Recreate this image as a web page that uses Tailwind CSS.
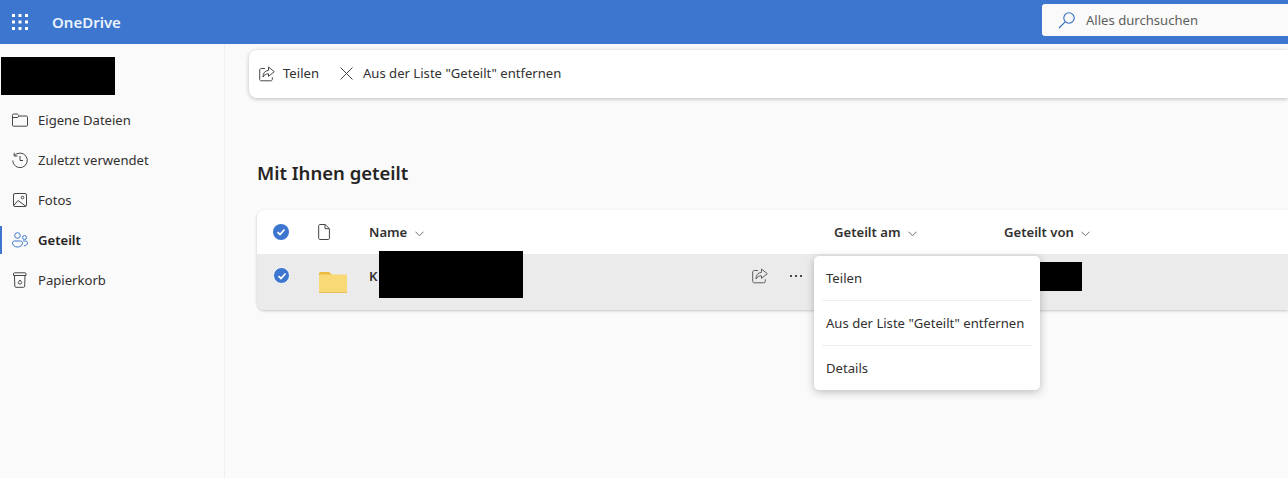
<!DOCTYPE html>
<html lang="de">
<head>
  <meta charset="UTF-8">
  <title>OneDrive</title>
  <script src="https://cdn.jsdelivr.net/npm/@tailwindcss/browser@4"></script>
</head>
<body class="h-[478px] w-[1288px] overflow-hidden bg-[#fafafa] font-['Noto_Sans',sans-serif] text-[13.1px] text-[#323130]">
  <!-- top bar -->
  <header class="flex h-11 items-center bg-[#3d76ce] text-white">
    <svg class="ml-3 h-4 w-4" viewBox="0 0 16 16" fill="#fff">
      <rect x="0" y="0" width="3" height="3"/><rect x="6.5" y="0" width="3" height="3"/><rect x="13" y="0" width="3" height="3"/>
      <rect x="0" y="6.5" width="3" height="3"/><rect x="6.5" y="6.5" width="3" height="3"/><rect x="13" y="6.5" width="3" height="3"/>
      <rect x="0" y="13" width="3" height="3"/><rect x="6.5" y="13" width="3" height="3"/><rect x="13" y="13" width="3" height="3"/>
    </svg>
    <span class="ml-6 text-[15px] font-semibold text-[#eaf2fc]">OneDrive</span>
    <div class="mb-1 ml-auto flex h-8 w-[246px] items-center rounded-l-[3px] bg-[#fafafa] pl-4">
      <svg class="h-[18px] w-[18px]" viewBox="0 0 18 18" fill="none" stroke="#2f6bbd" stroke-width="1.1">
        <circle cx="11" cy="7" r="5.2"/><path d="M7.2 10.8 1 17"/>
      </svg>
      <span class="ml-[10px] mt-px text-[#605e5c]">Alles durchsuchen</span>
    </div>
  </header>

  <div class="flex h-[434px]">
    <!-- left nav -->
    <aside class="w-[225px] shrink-0 border-r border-[#efefef] bg-[#fafafa]">
      <div class="ml-px mt-[13px] h-[38px] w-[114px] bg-black"></div>
      <nav class="mt-[5px]">
        <a class="flex h-10 items-center pl-3">
          <svg class="h-4 w-4" viewBox="0 0 16 16" fill="none" stroke="#484644"><path d="M.5 13V3.2A1.2 1.2 0 0 1 1.7 2h3.6L7.4 4h6.9a1.2 1.2 0 0 1 1.2 1.2V13a1.2 1.2 0 0 1-1.2 1.2H1.700A1.200 1.200 0 0 1 .5 13ZM.5 5.500h4.800L7.400 4"/></svg>
          <span class="ml-[10px] mt-[2px]">Eigene Dateien</span>
        </a>
        <a class="flex h-10 items-center pl-3">
          <svg class="h-4 w-4" viewBox="0 0 16 16" fill="none" stroke="#484644"><path d="M2.300 3.800A7.300 7.300 0 1 1 .7 8.500M2.200 .8v3.200h3.200M8 4v4.500h3"/></svg>
          <span class="ml-[10px] mt-[2px]">Zuletzt verwendet</span>
        </a>
        <a class="flex h-10 items-center pl-3">
          <svg class="h-4 w-4" viewBox="0 0 16 16" fill="none" stroke="#484644"><rect x="1.500" y="1.500" width="13" height="13" rx="1.500"/><circle cx="10.500" cy="5.500" r="1.300"/><path d="M1.700 13.500 6 8.500l7.800 5.700"/></svg>
          <span class="ml-[10px] mt-[2px]">Fotos</span>
        </a>
        <a class="relative flex h-10 items-center pl-3 font-semibold text-[#252423]">
          <span class="absolute left-0 top-[6px] h-7 w-[2px] bg-[#3d76ce]"></span>
          <svg class="h-4 w-4" viewBox="0 0 16 16" fill="none" stroke="#3d76ce"><circle cx="5.500" cy="3.500" r="2.800"/><circle cx="12.500" cy="5.500" r="2"/><path d="M.5 11c0-1.200.8-2 2-2h6c1.200 0 2 .8 2 2 0 2.500-2.500 4-5 4s-5-1.500-5-4ZM11 9h2.500c1.200 0 2 .7 2 1.800 0 1.700-1.500 3-3.700 3"/></svg>
          <span class="ml-[10px] mt-[2px]">Geteilt</span>
        </a>
        <a class="flex h-10 items-center pl-3">
          <svg class="h-4 w-4" viewBox="0 0 16 16" fill="none" stroke="#484644"><path d="M1.500 1.800c0-.6.5-1 1-1h10.500c.6 0 1 .4 1 1v1.700h-12.500ZM2.500 3.500l.3 10.700c0 .6.500 1.100 1.100 1.100h7.700c.6 0 1.100-.5 1.100-1.100l.3-10.700M6.200 10.500 8 8l1.800 2.500-1 1.500H7Z"/></svg>
          <span class="ml-[10px] mt-[2px]">Papierkorb</span>
        </a>
      </nav>
    </aside>

    <!-- content -->
    <main class="min-w-0 flex-1">
      <div class="ml-6 mt-[6px] flex h-12 items-center rounded-l-lg bg-white pb-px pl-[10px] shadow-[0_1px_4px_rgba(0,0,0,0.25)]">
        <svg class="h-4 w-4" viewBox="0 0 16 16" fill="none" stroke="#484644"><path d="M6 2.500H2.200C1.300 2.500.7 3.100.7 4v9.300c0 .9.600 1.500 1.500 1.500h9.600c.9 0 1.500-.6 1.500-1.500v-2M9.500 1l5.800 4.700-5.800 4.700V7.800C7 7.800 5.200 8.800 4 11c0-4 2-6.300 5.500-6.700Z"/></svg>
        <span class="ml-2">Teilen</span>
        <svg class="ml-[21px] h-[13px] w-[13px]" viewBox="0 0 13 13" fill="none" stroke="#484644"><path d="M.5.5l12 12M12.500.5l-12 12"/></svg>
        <span class="ml-[10px]">Aus der Liste "Geteilt" entfernen</span>
      </div>

      <h1 class="ml-8 mt-[59px] text-[18.5px] font-semibold leading-[32px] text-[#252423]">Mit Ihnen geteilt</h1>

      <div class="relative ml-8 mt-[21px] rounded-l-lg bg-white shadow-[0_1px_3px_rgba(0,0,0,0.22)]">
        <div class="flex h-11 items-center font-semibold">
          <span class="ml-4 flex h-4 w-4 items-center justify-center rounded-full bg-[#3d76ce]">
            <svg class="h-[10px] w-[10px]" viewBox="0 0 10 10" fill="none" stroke="#fff" stroke-width="1.800"><path d="M1.500 5.200 4 7.500 8.500 2.500"/></svg>
          </span>
          <svg class="ml-[27px] h-4 w-4" viewBox="0 0 16 16" fill="none" stroke="#484644"><path d="M2.700 1.500c0-.5.400-1 1-1h5.500l4.200 4.200v9.800c0 .6-.4 1-1 1h-8.700c-.6 0-1-.4-1-1ZM9 .7v4h4.300"/></svg>
          <span class="ml-[37px] mt-[2px] w-[465px] shrink-0">
            Name
            <svg class="ml-1 inline h-[9px] w-[9px]" viewBox="0 0 10 10" fill="none" stroke="#605e5c"><path d="M.5 3 5 7.500 9.500 3"/></svg>
          </span>
          <span class="mt-[2px] w-[170px] shrink-0">
            Geteilt am
            <svg class="ml-1 inline h-[9px] w-[9px]" viewBox="0 0 10 10" fill="none" stroke="#605e5c"><path d="M.5 3 5 7.500 9.500 3"/></svg>
          </span>
          <span class="mt-[2px]">
            Geteilt von
            <svg class="ml-1 inline h-[9px] w-[9px]" viewBox="0 0 10 10" fill="none" stroke="#605e5c"><path d="M.5 3 5 7.500 9.500 3"/></svg>
          </span>
        </div>

        <div class="relative flex h-[56px] rounded-bl-lg bg-[#ebebeb]">
          <span class="ml-4 mt-[13px] flex h-[17px] w-[17px] shrink-0 items-center justify-center rounded-full border border-white bg-[#3d76ce]">
            <svg class="h-[10px] w-[10px]" viewBox="0 0 10 10" fill="none" stroke="#fff" stroke-width="1.800"><path d="M1.500 5.200 4 7.500 8.500 2.500"/></svg>
          </span>
          <svg class="ml-[29px] mt-[18px] h-[21px] w-[28px] shrink-0" viewBox="0 0 28 21">
            <path d="M0 2C0 .8.800 0 2 0h7c1 0 1.500.4 2.200 1L13 3H2V5H0Z" fill="#eeb93e"/>
            <rect y="2.500" width="28" height="18.500" rx="1" fill="#f8d976"/>
            <rect y="20" width="28" height="1" fill="#e5bd5a"/>
          </svg>
          <span class="ml-[22px] mt-[13px] font-semibold">K</span>
          <svg class="ml-[375px] mt-[14px] h-4 w-4 shrink-0" viewBox="0 0 16 16" fill="none" stroke="#605e5c"><path d="M6 2.500H2.200C1.300 2.500.7 3.100.7 4v9.300c0 .9.600 1.500 1.500 1.500h9.600c.9 0 1.500-.6 1.500-1.500v-2M9.500 1l5.800 4.700-5.800 4.700V7.800C7 7.800 5.200 8.800 4 11c0-4 2-6.300 5.500-6.700Z"/></svg>
          <span class="ml-[22px] mt-[21px] flex h-[3px] gap-[3px]">
            <i class="h-[2px] w-[2px] bg-[#484644]"></i><i class="h-[2px] w-[2px] bg-[#484644]"></i><i class="h-[2px] w-[2px] bg-[#484644]"></i>
          </span>
          <!-- redacted cells -->
          <div class="absolute left-[122px] top-[-3px] h-[47px] w-[144px] bg-black"></div>
          <div class="absolute left-[781px] top-[8px] h-[29px] w-[44px] bg-black"></div>
        </div>

        <!-- context menu -->
        <div class="absolute left-[557px] top-[46px] w-[226px] rounded-[5px] bg-white px-2 shadow-[0_2px_8px_rgba(0,0,0,0.25)]">
          <div class="flex h-[45px] items-center border-b border-[#efefef] px-1 pt-[2px]">Teilen</div>
          <div class="flex h-[45px] items-center whitespace-nowrap border-b border-[#efefef] px-1 pt-[2px]">Aus der Liste "Geteilt" entfernen</div>
          <div class="flex h-[44px] items-center px-1 pt-[2px]">Details</div>
        </div>
      </div>
    </main>
  </div>
</body>
</html>
